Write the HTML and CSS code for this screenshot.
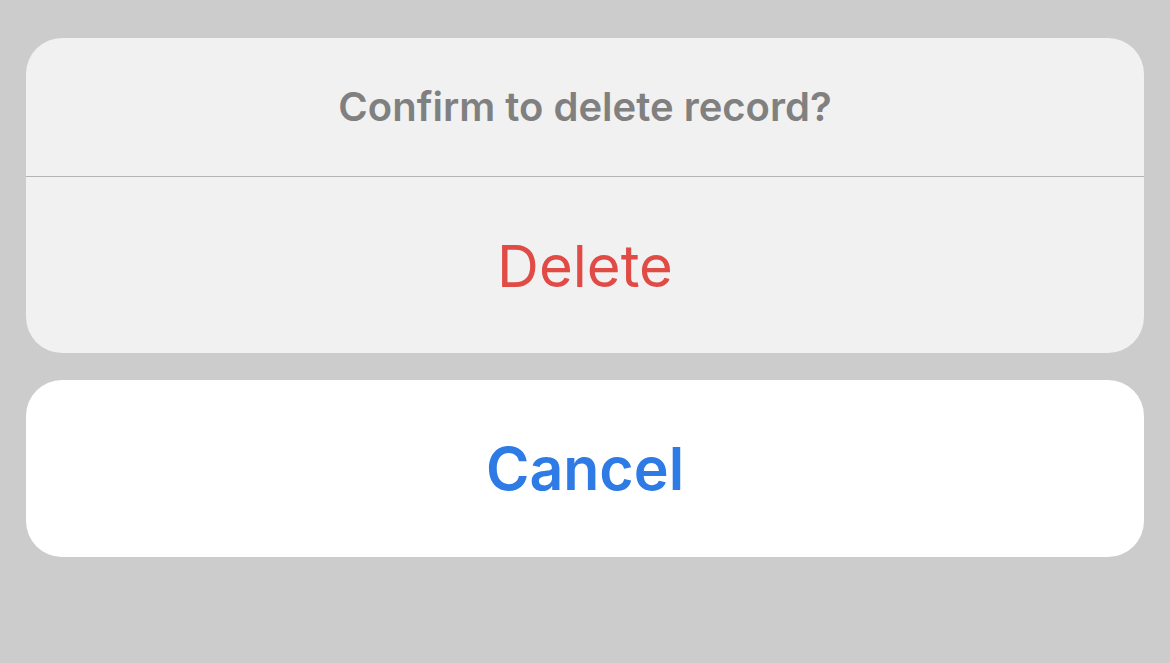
FILE: index.html
```html
<!DOCTYPE html>
<html lang="en">
<head>
    <meta charset="UTF-8">
    <meta name="viewport" content="width=device-width, initial-scale=1.0">
    <title>Action Sheet</title>
    <link rel="stylesheet" href="styles.css">
</head>
<body>
    <div class="sheet">
        <div class="group">
            <div class="title">Confirm to delete record?</div>
            <button class="action destructive">Delete</button>
        </div>
        <div class="group cancel-group">
            <button class="action cancel">Cancel</button>
        </div>
    </div>
</body>
</html>
```

FILE: styles.css
```css
* {
    box-sizing: border-box;
    margin: 0;
    padding: 0;
}

body {
    font-family: Inter, 'Noto Sans', sans-serif;
    background: #cccccc;
    width: 1170px;
    height: 663px;
    overflow: hidden;
}

.sheet {
    display: flex;
    flex-direction: column;
    gap: 27px;
    padding: 38px 26px 0 26px;
}

.group {
    background: #f1f1f1;
    border-radius: 36px;
    overflow: hidden;
    display: flex;
    flex-direction: column;
}

.cancel-group {
    background: #ffffff;
}

.title {
    height: 139px;
    display: flex;
    align-items: center;
    justify-content: center;
    font-size: 40px;
    font-weight: 600;
    color: #808080;
    border-bottom: 1px solid #b4b4b4;
    padding-bottom: 2px;
}

.action {
    height: 176px;
    border: none;
    background: transparent;
    font-family: inherit;
    width: 100%;
    display: flex;
    align-items: center;
    justify-content: center;
    cursor: pointer;
}

.destructive {
    font-size: 58px;
    font-weight: 400;
    color: #e04b46;
    padding-top: 2px;
}

.cancel {
    height: 177px;
    font-size: 59px;
    font-weight: 600;
    color: #2f7be6;
}
```
